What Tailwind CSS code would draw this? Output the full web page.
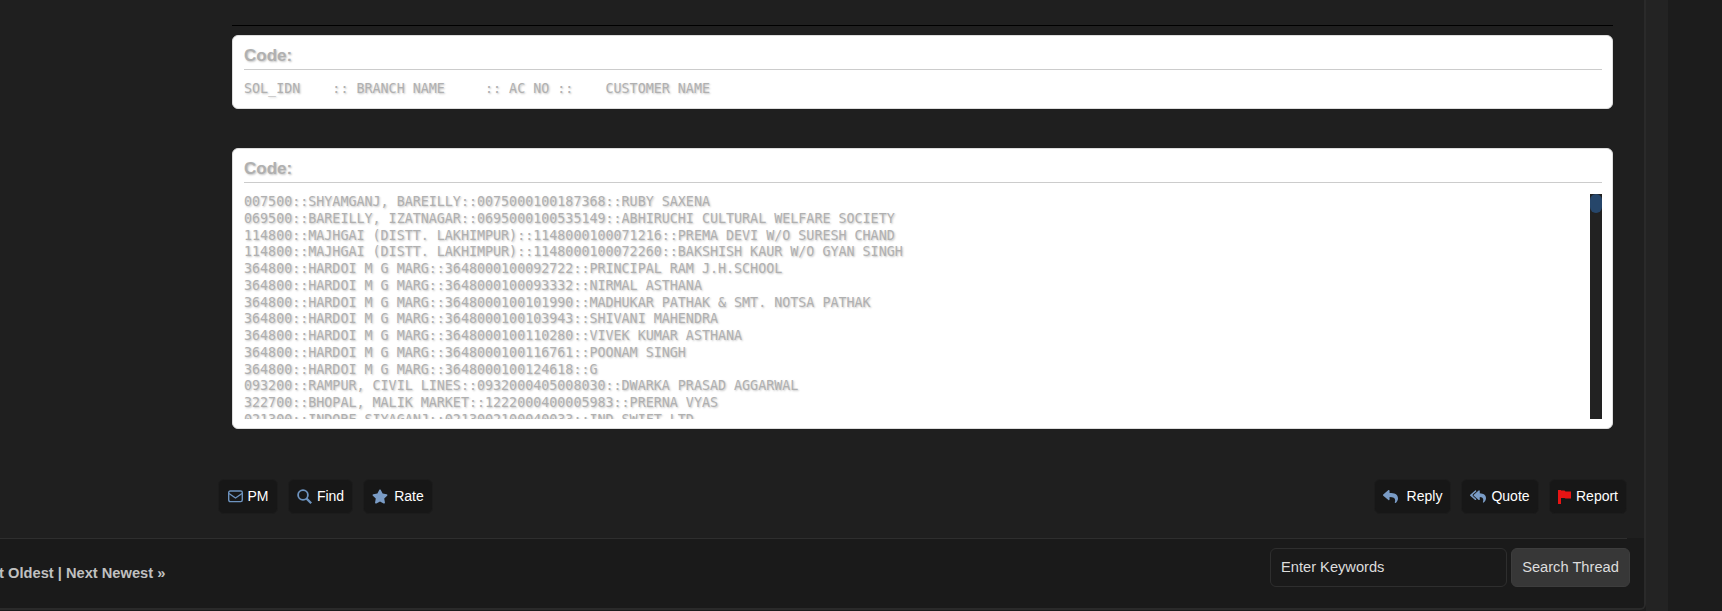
<!DOCTYPE html>
<html lang="en">
<head>
    <meta charset="UTF-8">
    <title>Thread</title>
    <script src="https://cdn.jsdelivr.net/npm/@tailwindcss/browser@4"></script>
</head>
<body class="bg-[#1c1c1c] font-['Liberation_Sans',sans-serif]">
<div class="flex h-[611px] overflow-hidden">

    <!-- Thread panel -->
    <main class="w-[1646px] h-[610px] shrink-0 flex flex-col bg-[#1f1f1f] border-r-2 border-b-2 border-[#2a2a2a] rounded-br-md overflow-hidden">

        <!-- Post body -->
        <div class="flex-1 pl-[218px] pr-[17px]">
            <div class="pl-[14px] pr-[14px] pt-[25px]">
                <div class="border-t border-black"></div>

                <!-- Code block: header row -->
                <div class="mt-[9px] h-[74px] bg-white rounded-md pl-[11px] pr-[10px] pt-[8px] border border-[#ddd]">
                    <div class="h-[26px] text-[17px] leading-[24px] font-bold text-[#b0b0b0] [text-shadow:1px_1px_2px_#c4c4c4] border-b border-[#ccc]">Code:</div>
                    <pre class="mt-[10px] font-['DejaVu_Sans_Mono',monospace] text-[13.35px] leading-[17px] text-[#b0b0b0] [text-shadow:1px_1px_2px_#c4c4c4]">SOL_IDN    :: BRANCH NAME     :: AC NO ::    CUSTOMER NAME</pre>
                </div>

                <!-- Code block: rows -->
                <div class="mt-[39px] h-[281px] bg-white rounded-md pl-[11px] pr-[10px] pt-[8px] border border-[#ddd]">
                    <div class="h-[26px] text-[17px] leading-[24px] font-bold text-[#b0b0b0] [text-shadow:1px_1px_2px_#c4c4c4] border-b border-[#ccc]">Code:</div>
                    <div class="mt-[11px] flex h-[225px]">
                        <pre class="flex-1 overflow-hidden font-['DejaVu_Sans_Mono',monospace] text-[13.35px] leading-[16.75px] text-[#b0b0b0] [text-shadow:1px_1px_2px_#c4c4c4]">007500::SHYAMGANJ, BAREILLY::0075000100187368::RUBY SAXENA
069500::BAREILLY, IZATNAGAR::0695000100535149::ABHIRUCHI CULTURAL WELFARE SOCIETY
114800::MAJHGAI (DISTT. LAKHIMPUR)::1148000100071216::PREMA DEVI W/O SURESH CHAND
114800::MAJHGAI (DISTT. LAKHIMPUR)::1148000100072260::BAKSHISH KAUR W/O GYAN SINGH
364800::HARDOI M G MARG::3648000100092722::PRINCIPAL RAM J.H.SCHOOL
364800::HARDOI M G MARG::3648000100093332::NIRMAL ASTHANA
364800::HARDOI M G MARG::3648000100101990::MADHUKAR PATHAK &amp; SMT. NOTSA PATHAK
364800::HARDOI M G MARG::3648000100103943::SHIVANI MAHENDRA
364800::HARDOI M G MARG::3648000100110280::VIVEK KUMAR ASTHANA
364800::HARDOI M G MARG::3648000100116761::POONAM SINGH
364800::HARDOI M G MARG::3648000100124618::G
093200::RAMPUR, CIVIL LINES::0932000405008030::DWARKA PRASAD AGGARWAL
322700::BHOPAL, MALIK MARKET::1222000400005983::PRERNA VYAS
021300::INDORE SIYAGANJ::0213002100040033::IND SWIFT LTD</pre>
                        <div class="w-3 bg-[#222]">
                            <div class="h-[19px] rounded-[6px] bg-[#26466a]"></div>
                        </div>
                    </div>
                </div>
            </div>

            <!-- Post buttons -->
            <div class="mt-[50px] flex justify-between text-[14px] text-white">
                <div class="flex gap-[10px]">
                    <a class="h-[35px] w-[60px] flex items-center justify-center gap-[5px] bg-[#171717] border border-[#1c1c1c] rounded-md">
                        <svg class="w-[15px] h-[13px]" viewBox="0 0 15 13" fill="none" stroke="#6d93bf" stroke-width="1.4"><rect x=".7" y="1" width="13.6" height="10.6" rx="1.5"/><path d="M1 3.5 7.5 8 14 3.5"/></svg>
                        PM
                    </a>
                    <a class="h-[35px] w-[65px] flex items-center justify-center gap-[5px] bg-[#171717] border border-[#1c1c1c] rounded-md">
                        <svg class="w-[15px] h-[15px]" viewBox="0 0 15 15" fill="none" stroke="#6d93bf" stroke-width="1.8"><circle cx="6" cy="6" r="4.9"/><path d="M9.6 9.6 14.2 14.2" stroke-width="2.2"/></svg>
                        Find
                    </a>
                    <a class="h-[35px] w-[70px] flex items-center justify-center gap-[6px] bg-[#171717] border border-[#1c1c1c] rounded-md">
                        <svg class="w-[16px] h-[15px]" viewBox="0 0 576 512" fill="#7a9cc6"><path d="M259.3 17.8L194 150.2 47.9 171.5c-26.2 3.8-36.7 36.1-17.7 54.6l105.7 103-25 145.5c-4.5 26.3 23.2 46 46.4 33.7L288 439.6l130.7 68.7c23.2 12.2 50.9-7.4 46.4-33.7l-25-145.5 105.7-103c19-18.5 8.5-50.8-17.7-54.6L382 150.2 316.7 17.8c-11.7-23.6-45.6-23.9-57.4 0z"/></svg>
                        Rate
                    </a>
                </div>
                <div class="flex gap-[10px]">
                    <a class="h-[35px] w-[77px] flex items-center justify-center gap-[9px] bg-[#171717] border border-[#1c1c1c] rounded-md">
                        <svg class="w-[15px] h-[15px]" viewBox="0 0 512 512" fill="#7a9cc6"><path d="M8.309 189.836L184.313 37.851C199.719 24.546 224 35.347 224 56.015v80.053c160.629 1.839 288 34.032 288 186.258 0 61.441-39.581 122.309-83.333 154.132-13.653 9.931-33.111-2.533-28.077-18.631 45.344-145.012-21.507-183.51-176.59-185.742V360c0 20.7-24.3 31.453-39.687 18.164l-176.004-152c-11.071-9.562-11.086-26.753 0-36.328z"/></svg>
                        Reply
                    </a>
                    <a class="h-[35px] w-[78px] flex items-center justify-center gap-[5px] bg-[#171717] border border-[#1c1c1c] rounded-md">
                        <svg class="w-[16px] h-[15px]" viewBox="0 0 576 512" fill="#7a9cc6"><path d="M136.309 189.836L312.313 37.851C327.72 24.546 352 35.348 352 56.015v82.763c129.182 10.231 224 52.212 224 183.548 0 61.441-39.582 122.309-83.333 154.132-13.653 9.931-33.111-2.533-28.077-18.631 38.512-123.162-3.922-169.482-112.59-182.015v84.175c0 20.701-24.3 31.453-39.687 18.164L136.309 226.164c-11.071-9.561-11.086-26.753 0-36.328zm-128 36.328L184.313 378.15C199.7 391.439 224 380.687 224 359.986v-15.818l-108.606-93.785A55.96 55.96 0 0 1 96 207.998a55.953 55.953 0 0 1 19.393-42.38L224 71.832V56.015c0-20.667-24.28-31.469-39.687-18.164L8.309 189.836c-11.086 9.575-11.071 26.767 0 36.328z"/></svg>
                        Quote
                    </a>
                    <a class="h-[35px] w-[78px] flex items-center justify-center gap-[5px] bg-[#171717] border border-[#1c1c1c] rounded-md">
                        <svg class="w-[13px] h-[14px]" viewBox="0 0 13 14" fill="#e81414"><path d="M0 0H3V14H0ZM3 .5H6.5L7.5 1.5H13V8.5H7.5L6.5 8H3Z"/></svg>
                        Report
                    </a>
                </div>
            </div>
        </div>

        <!-- Thread footer -->
        <div class="h-[70px] bg-[#1a1a1a] pr-[14px] shrink-0">
            <div class="h-px mr-[3px] bg-[#2e2e2e]"></div>
            <div class="pt-[9px] flex justify-between items-start">
                <div class="-ml-[40px] pt-[14px] whitespace-nowrap text-[14.667px] font-bold text-[#c0c0c0]">« Next Oldest | Next Newest »</div>
                <div class="flex gap-[4px]">
                    <div class="w-[237px] h-[39px] flex items-center px-[10px] pb-[2px] bg-[#1a1a1a] border border-[#2e2e2e] rounded-md text-[14.667px] text-[#ddd]">Enter Keywords</div>
                    <div class="w-[119px] h-[39px] flex items-center justify-center pb-[2px] bg-[#373737] border border-[#3d3d3d] rounded-md text-[14.667px] text-[#ddd]">Search Thread</div>
                </div>
            </div>
        </div>
    </main>

    <!-- Side gutter -->
    <div class="w-[22px] shrink-0 bg-[#232323]"></div>
    <div class="flex-1"></div>
</div>
</body>
</html>
